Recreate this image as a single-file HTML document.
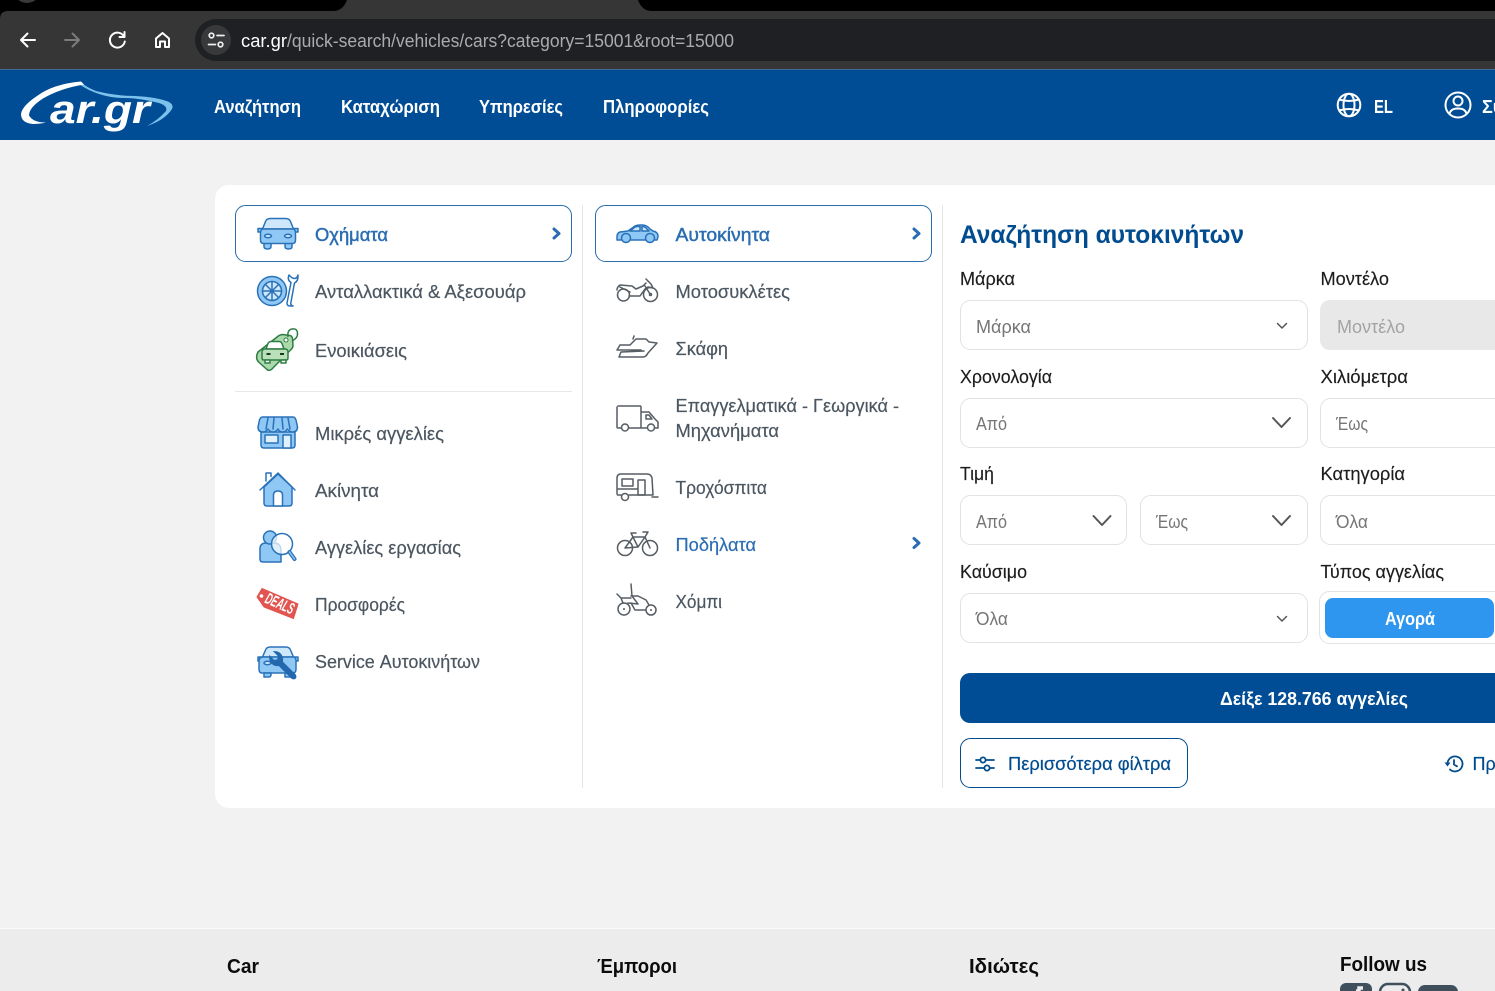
<!DOCTYPE html>
<html lang="el"><head><meta charset="utf-8"><title>car.gr</title>
<style>
html,body{margin:0;padding:0;width:1495px;height:991px;overflow:hidden;background:#f2f2f2}
svg{display:block}
text{font-family:"Liberation Sans","DejaVu Sans",sans-serif}
.nav{font-size:18px;fill:#fff;font-weight:700}
.m{font-size:18px;fill:#4b5660;stroke:#4b5660;stroke-width:.2}
.a{font-size:18px;fill:#2a6db2;stroke:#2a6db2;stroke-width:.45}
.l{font-size:18px;fill:#1c1c1c;stroke:#1c1c1c;stroke-width:.15}
.v{font-size:18px;fill:#757575}
.f{font-size:20px;fill:#0c0c0c;font-weight:700}
.bx{fill:#fff;stroke:#e2e2e2;stroke-width:1}
.ib{fill:#8fc7f5;stroke:#2a72b8;stroke-width:1.5;stroke-linejoin:round;stroke-linecap:round}
.il{fill:#fff;stroke:#2a72b8;stroke-width:1.5;stroke-linejoin:round;stroke-linecap:round}
.g{fill:none;stroke:#555d63;stroke-width:1.5;stroke-linejoin:round;stroke-linecap:round}
.gr{fill:#abd9ab;stroke:#2f7d46;stroke-width:1.5;stroke-linejoin:round;stroke-linecap:round}
.ch{fill:none;stroke:#2a6db2;stroke-width:3;stroke-linecap:round;stroke-linejoin:round}
.sc{fill:none;stroke:#555;stroke-width:1.5;stroke-linecap:round;stroke-linejoin:round}
.sc2{fill:none;stroke:#555;stroke-width:2;stroke-linecap:round;stroke-linejoin:round}
.w{fill:none;stroke:#fff;stroke-width:2;stroke-linecap:round;stroke-linejoin:round}
</style></head>
<body>
<svg xmlns="http://www.w3.org/2000/svg" width="1495" height="991" viewBox="0 0 1495 991">
<!-- browser chrome -->
<rect width="1495" height="70" fill="#000"/>
<path d="M0 70V19q0-8 8-8H333q10 0 14-11H638q4 11 14 11H1495V70Z" fill="#363636"/>
<circle cx="27" cy="-11" r="14" fill="#3a3a3a"/>
<rect x="195" y="19" width="1320" height="42" rx="21" fill="#1f2023"/>
<circle cx="216" cy="40" r="15" fill="#38393b"/>
<g fill="none" stroke="#f0f0f0" stroke-width="1.7" stroke-linecap="round">
<circle cx="211.500" cy="35.500" r="2.300"/><path d="M217 35.500h7"/><path d="M208.500 44.500h7"/><circle cx="220.500" cy="44.500" r="2.300"/>
</g>
<path class="w" d="M35 40H21.500M27.500 33.500L21 40l6.500 6.500"/>
<path d="M65 40H78.500M72.500 33.500L79 40l-6.500 6.500" fill="none" stroke="#7c7c7c" stroke-width="2" stroke-linecap="round" stroke-linejoin="round"/>
<path class="w" d="M124 36.500a7.500 7.500 0 1 0 .8 5M124.500 32v5h-5"/>
<path class="w" d="M156 47V38.500L162.500 33l6.500 5.500V47h-4V41.500h-5V47Z"/>
<text x="241" y="47" font-size="18" fill="#fff" textLength="46" lengthAdjust="spacingAndGlyphs">car.gr</text>
<text x="287" y="47" font-size="18" fill="#a9abad" textLength="447" lengthAdjust="spacingAndGlyphs">/quick-search/vehicles/cars?category=15001&amp;root=15000</text>

<!-- header -->
<rect y="69" width="1495" height="71" fill="#004c95"/>
<rect y="69" width="1495" height="1" fill="#3d6c96"/>
<!-- logo -->
<path d="M81 82q5 5 15 9 20 5 39 5 22 1 34 6 5 3 3 7-7 11-25 17 11-6 19-15 2-5-7-8-20-5-35-5-18 0-35-8-6-3-10-6Z" fill="#7cc1ec"/>
<path d="M81 81.500Q53 84 37 96 22 106 21 114q0 9 12 10 7 0 13-1.500-13 0-17-7 0-8 14-17 17-10 41-14Z" fill="#fff"/>
<text x="50" y="123" font-size="40" font-weight="700" font-style="italic" fill="#fff" textLength="100" lengthAdjust="spacingAndGlyphs">ar.gr</text>

<text class="nav" x="214" y="113" textLength="87" lengthAdjust="spacingAndGlyphs">Αναζήτηση</text>
<text class="nav" x="341" y="113" textLength="99" lengthAdjust="spacingAndGlyphs">Καταχώριση</text>
<text class="nav" x="479" y="113" textLength="84" lengthAdjust="spacingAndGlyphs">Υπηρεσίες</text>
<text class="nav" x="603" y="113" textLength="106" lengthAdjust="spacingAndGlyphs">Πληροφορίες</text>
<g fill="none" stroke="#fff" stroke-width="2">
<circle cx="1349" cy="105" r="11.300"/><ellipse cx="1349" cy="105" rx="5.500" ry="11.300"/><path d="M1339 99.500q10 3 20 0M1339 110.500q10-3 20 0"/>
<circle cx="1458" cy="105" r="12.500"/><circle cx="1458" cy="101" r="4.500"/><path d="M1449.500 114q1-5.500 8.500-5.500t8.500 5.500"/>
</g>
<text class="nav" x="1374" y="113" textLength="19" lengthAdjust="spacingAndGlyphs">EL</text>
<text class="nav" x="1482" y="113">Σύνδεση</text>

<!-- card -->
<rect x="215" y="185" width="1320" height="623" rx="14" fill="#fff"/>
<rect x="582" y="205" width="1" height="583" fill="#e4e4e4"/>
<rect x="942" y="205" width="1" height="583" fill="#e4e4e4"/>
<rect x="235" y="391" width="337" height="1" fill="#e8e8e8"/>
<rect x="235.500" y="205.500" width="336" height="56" rx="10" fill="#fff" stroke="#2a6da8"/>
<rect x="595.500" y="205.500" width="336" height="56" rx="10" fill="#fff" stroke="#2a6da8"/>
<path class="ch" d="M554 229l5 4.500-5 4.500"/><path class="ch" d="M914 229l5 4.500-5 4.500"/><path class="ch" d="M914 538.500l5 4.500-5 4.500"/>

<!-- left icons -->
<!-- car front -->
<path class="ib" d="M258 228.500h4v3.500h-4ZM294 228.500h4v3.500h-4Z"/>
<path class="ib" d="M264 243h7v3.500q0 2.500-3.500 2.500t-3.500-2.500ZM285 243h7v3.500q0 2.500-3.500 2.500t-3.500-2.500Z"/>
<path class="il" style="fill:#cfe7fb" d="M262.500 229l3-7.500q1-3 5-3h15q4 0 5 3l3 7.500Z"/>
<path class="ib" d="M262.500 229h31q2 1 2 4v7q0 3.500-3 3.500h-29q-3 0-3-3.500v-7q0-3 2-4Z"/>
<ellipse class="il" style="fill:#cfe7fb" cx="268" cy="236" rx="3.500" ry="1.700"/><ellipse class="il" style="fill:#cfe7fb" cx="288" cy="236" rx="3.500" ry="1.700"/>
<!-- tyre & wrench -->
<circle class="ib" cx="272" cy="291" r="14.500"/><circle class="il" style="fill:#cfe7fb" cx="272" cy="291" r="9.500"/>
<path class="il" d="M272 281.500v19M262.500 291h19M265.500 284.500l13 13M278.500 284.500l-13 13"/>
<circle cx="272" cy="291" r="2" fill="#2a72b8"/>
<path class="il" d="M289 275q-2 5 2 7.500L287 303q0 3 3 3h3q-3-1-2-4l3.500-19q4-2 3.500-8-1 3.500-3.500 3.500T289 275Z"/>
<!-- rental tag -->
<path class="gr" d="M258 352L279 335.500q2-1 4-1l7 1q2 .5 2.500 3l.5 7q0 2-1.500 3.500L272 369q-2.500 2.500-5 .5l-8.500-7.500q-3.500-4-.5-10Z"/>
<path d="M288 337q-1-7 4-8t5.500 4-5.500 8" fill="none" stroke="#2f7d46" stroke-width="1.5"/>
<circle cx="286" cy="340" r="2" fill="#fff" stroke="#2f7d46"/>
<path class="gr" style="fill:#fff" d="M266 349l2-5.500q1-2 3-2h8q2 0 3 2l2 5.500Z"/>
<path class="gr" style="fill:#b9e0b9" d="M264 349h22q2 1 2 3v6q0 2-2 2h-22q-2 0-2-2v-6q0-2 2-3Z"/>
<path d="M266.500 354h4M280 354h4" stroke="#173c22" stroke-width="2"/>
<path class="gr" style="fill:#fff" d="M265 360h5v3h-5ZM281 360h5v3h-5Z"/>
<!-- shop -->
<path class="ib" d="M261 432h34v13q0 3-3 3h-28q-3 0-3-3Z"/>
<path class="il" style="fill:#e0f0fd" d="M265 435h13v8h-13Z"/><path class="il" style="fill:#e0f0fd" d="M283 435h8v13h-8Z"/>
<path class="ib" d="M263 417h30q2 0 3 3l1.500 7q0 5-5 5-3 0-5-3-2 3-5 3-3 0-4.500-3-2 3-5 3-3 0-5-3-2 3-5 3-5 0-5-5l1.500-7q1-3 3-3Z"/>
<path class="ib" style="fill:none" d="M268 418l-2 11M274 418l-1 11M282 418l1 11M288 418l2 11"/>
<!-- house -->
<path class="ib" d="M264 487v16q0 3 3 3h22q3 0 3-3v-16l-14-13Z"/>
<path class="il" d="M273.500 506v-11q0-4 4.500-4t4.500 4v11Z"/>
<path d="M260 490l18-17 17 17" fill="none" stroke="#2a72b8" stroke-width="1.500" stroke-linecap="round" stroke-linejoin="round"/>
<path class="il" d="M266 481v-8h5v3.500"/>
<!-- person search -->
<path class="ib" d="M260 559v-10q0-6 6-6h8q6 0 7 6v13h-18q-3 0-3-3Z"/>
<circle class="ib" cx="270" cy="537.500" r="6.500"/>
<circle cx="282" cy="544" r="10.500" fill="#fff" fill-opacity=".72" stroke="#2a72b8" stroke-width="1.5"/>
<path d="M289.500 552l5 7" stroke="#2a72b8" stroke-width="4" stroke-linecap="round"/>
<path d="M289.500 552l5 7" stroke="#8fc7f5" stroke-width="1.500" stroke-linecap="round"/>
<!-- deals -->
<path d="M262 588.500L298 604l-4.500 14.500L264 607l-7-10Z" fill="#e2544f" stroke="#e2544f" stroke-linejoin="round"/>
<circle cx="261.500" cy="596" r="1.800" fill="#fff"/>
<text x="265" y="608.500" font-size="16" font-weight="700" font-style="italic" fill="#fff" transform="rotate(24 279 603)" textLength="30" lengthAdjust="spacingAndGlyphs">DEALS</text>
<!-- service -->
<path class="ib" d="M258 657h4v4h-4ZM294 657h4v4h-4Z"/>
<path class="il" style="fill:#cfe7fb" d="M262.500 657l3-7q1-3 5-3h15q4 0 5 3l3 7Z"/>
<path class="ib" d="M262 657h32q2 1 2 4v8q0 4-3 4h-31q-3 0-3-4v-8q0-3 3-4Z"/>
<path class="ib" d="M264 677v-4h7v2q0 2-3 2ZM285 677v-4h7v2q0 2-3 2Z"/>
<ellipse class="il" style="fill:#cfe7fb" cx="267.500" cy="663" rx="3.500" ry="1.700"/>
<path d="M295 675l-13-13q1-5-2-8-2-2-5-2l4 4-1 4-4 1-4-4q0 4 2 6 3 3 7 2l13 13q2 1 3 0t0-3Z" fill="#2368ae" stroke="#2368ae" stroke-width="1.800"/>

<!-- middle icons -->
<path class="ib" d="M617 237q0-4 3-5l8-1 7-5q2-1 5-1h2q5 0 8 4l3 2q5 1 5 5 0 2-1 4h-40q0-1 0-3Z"/>
<circle class="ib" cx="626" cy="238" r="4.500"/><circle class="ib" cx="650" cy="238" r="4.500"/>
<path class="il" style="fill:#cfe7fb" d="M630 231l5-4q1-.5 3-.5h2v4.500ZM642 226.500q3 0 5 2.500l2 2h-7Z"/>
<circle class="g" cx="623.500" cy="295" r="6"/><circle class="g" cx="650.500" cy="294.500" r="7"/><circle class="g" cx="650.500" cy="294.500" r="1"/><path class="g" d="M629 296h11l5-7 3-2 5 1-2-4-5-5M617 290q0-3 3-5l12 1 4 3 7-3 3-3M620 287l10 5M645 286l5 8"/>
<path class="g" d="M620 345h10l6-6h10l3 3 8 1-9 10q-2 4-5 4h-24l2-5 23-1M620 345l-3 5h24M633 339l1-3M636 351h8"/>
<path class="g" d="M618 406h22q1 0 1 1v21h-12M621 428h-3q-1 0-1-1v-20M641 412h8l6 7 3 3v6h-3M641 428h6"/><circle class="g" cx="625" cy="427.500" r="3.500"/><circle class="g" cx="651" cy="427.500" r="3.500"/><path class="g" d="M646 415h3l3 4h-6Z"/>
<path class="g" d="M621 495h-3q-1 0-1-2v-15q0-4 4-4h26q4 0 5 4l1 17H629"/><path class="g" d="M622 479h11v7h-11ZM638 480h7v15h-7ZM652 497h6M618 489h20"/><circle class="g" cx="625" cy="497" r="3.500"/>
<circle class="g" cx="625" cy="548" r="7.500"/><circle class="g" cx="650" cy="548" r="7.500"/><path class="g" d="M625 548l8-11h12l5 11M645 537l-7 10-5-10M638 547l-13 1M631 533h5M643 532h5l-3 5M633 537l-2-4"/>
<circle class="g" cx="624" cy="609" r="6"/><circle class="g" cx="651" cy="610" r="5"/><circle cx="624" cy="609" r="1" fill="#555d63"/><circle cx="651" cy="610" r="1" fill="#555d63"/><path class="g" d="M631 584l1 12 6 8-10-1M617 594l4 4h10M621 598l2 5M638 596l8 4 3 5M631 603l4 7h10M631 596h7"/>

<!-- menu text -->
<text class="a" x="315" y="241" textLength="73" lengthAdjust="spacingAndGlyphs">Οχήματα</text>
<text class="m" x="315" y="298" textLength="211" lengthAdjust="spacingAndGlyphs">Ανταλλακτικά &amp; Αξεσουάρ</text>
<text class="m" x="315" y="357" textLength="92" lengthAdjust="spacingAndGlyphs">Ενοικιάσεις</text>
<text class="m" x="315" y="440" textLength="129" lengthAdjust="spacingAndGlyphs">Μικρές αγγελίες</text>
<text class="m" x="315" y="497" textLength="64" lengthAdjust="spacingAndGlyphs">Ακίνητα</text>
<text class="m" x="315" y="554" textLength="146" lengthAdjust="spacingAndGlyphs">Αγγελίες εργασίας</text>
<text class="m" x="315" y="611" textLength="90" lengthAdjust="spacingAndGlyphs">Προσφορές</text>
<text class="m" x="315" y="668" textLength="165" lengthAdjust="spacingAndGlyphs">Service Αυτοκινήτων</text>
<text class="a" x="675.500" y="241" textLength="94.500" lengthAdjust="spacingAndGlyphs">Αυτοκίνητα</text>
<text class="m" x="675.500" y="298" textLength="114.500" lengthAdjust="spacingAndGlyphs">Μοτοσυκλέτες</text>
<text class="m" x="675.500" y="355" textLength="52.500" lengthAdjust="spacingAndGlyphs">Σκάφη</text>
<text class="m" x="675.500" y="412" textLength="223.500" lengthAdjust="spacingAndGlyphs">Επαγγελματικά - Γεωργικά -</text>
<text class="m" x="675.500" y="437" textLength="103.500" lengthAdjust="spacingAndGlyphs">Μηχανήματα</text>
<text class="m" x="675.500" y="494" textLength="91.500" lengthAdjust="spacingAndGlyphs">Τροχόσπιτα</text>
<text class="a" style="stroke-width:.2" x="675.500" y="551" textLength="80.500" lengthAdjust="spacingAndGlyphs">Ποδήλατα</text>
<text class="m" x="675.500" y="608" textLength="46.500" lengthAdjust="spacingAndGlyphs">Χόμπι</text>

<!-- form -->
<text x="960" y="243" font-size="25" font-weight="700" fill="#004c8f" textLength="284" lengthAdjust="spacingAndGlyphs">Αναζήτηση αυτοκινήτων</text>
<text class="l" x="960" y="285" textLength="55" lengthAdjust="spacingAndGlyphs">Μάρκα</text>
<text class="l" x="1320.500" y="285" textLength="68.500" lengthAdjust="spacingAndGlyphs">Μοντέλο</text>
<text class="l" x="960" y="383" textLength="92" lengthAdjust="spacingAndGlyphs">Χρονολογία</text>
<text class="l" x="1320.500" y="383" textLength="87.500" lengthAdjust="spacingAndGlyphs">Χιλιόμετρα</text>
<text class="l" x="960" y="480" textLength="34" lengthAdjust="spacingAndGlyphs">Τιμή</text>
<text class="l" x="1320.500" y="480" textLength="84.500" lengthAdjust="spacingAndGlyphs">Κατηγορία</text>
<text class="l" x="960" y="578" textLength="67" lengthAdjust="spacingAndGlyphs">Καύσιμο</text>
<text class="l" x="1320.500" y="578" textLength="123.500" lengthAdjust="spacingAndGlyphs">Τύπος αγγελίας</text>

<rect class="bx" x="960.500" y="300.500" width="347" height="49" rx="10"/>
<rect x="1320" y="300" width="200" height="50" rx="10" fill="#e8e8e8"/>
<rect class="bx" x="960.500" y="398.500" width="347" height="49" rx="10"/>
<rect class="bx" x="1320.500" y="398.500" width="200" height="49" rx="10"/>
<rect class="bx" x="960.500" y="495.500" width="166" height="49" rx="10"/>
<rect class="bx" x="1140.500" y="495.500" width="167" height="49" rx="10"/>
<rect class="bx" x="1320.500" y="495.500" width="200" height="49" rx="10"/>
<rect class="bx" x="960.500" y="593.500" width="347" height="49" rx="10"/>
<rect class="bx" x="1319.500" y="591.500" width="200" height="52" rx="10"/>
<rect x="1325" y="598" width="169" height="40" rx="8" fill="#2e96ee"/>
<rect x="960" y="673" width="600" height="50" rx="10" fill="#004c95"/>
<rect x="960.500" y="738.500" width="227" height="49" rx="10" fill="#fff" stroke="#004c8f"/>

<path class="sc" d="M1277.500 323.500l4.500 4.500 4.500-4.500"/>
<path class="sc" d="M1277.500 616.500l4.500 4.500 4.500-4.500"/>
<path class="sc2" d="M1273 418l8.500 9 8.500-9"/>
<path class="sc2" d="M1093.500 516l8.500 9 8.500-9"/>
<path class="sc2" d="M1273 516l8.500 9 8.500-9"/>

<text class="v" x="976" y="333" textLength="55" lengthAdjust="spacingAndGlyphs">Μάρκα</text>
<text class="v" style="fill:#a3a3a3" x="1337" y="333" textLength="68" lengthAdjust="spacingAndGlyphs">Μοντέλο</text>
<text class="v" x="976" y="430" textLength="31" lengthAdjust="spacingAndGlyphs">Από</text>
<text class="v" x="1336" y="430" textLength="32" lengthAdjust="spacingAndGlyphs">Έως</text>
<text class="v" x="976" y="528" textLength="31" lengthAdjust="spacingAndGlyphs">Από</text>
<text class="v" x="1156" y="528" textLength="32" lengthAdjust="spacingAndGlyphs">Έως</text>
<text class="v" x="1336" y="528" textLength="32" lengthAdjust="spacingAndGlyphs">Όλα</text>
<text class="v" x="976" y="625" textLength="32" lengthAdjust="spacingAndGlyphs">Όλα</text>
<text x="1385" y="625" font-size="18" font-weight="700" fill="#fff" textLength="50" lengthAdjust="spacingAndGlyphs">Αγορά</text>
<text x="1220" y="705" font-size="18" font-weight="700" fill="#fff" textLength="188" lengthAdjust="spacingAndGlyphs">Δείξε 128.766 αγγελίες</text>
<text x="1008" y="770" font-size="18" fill="#004c8f" stroke="#004c8f" stroke-width=".2" textLength="163" lengthAdjust="spacingAndGlyphs">Περισσότερα φίλτρα</text>
<g fill="none" stroke="#004c8f" stroke-width="1.800" stroke-linecap="round">
<path d="M976 760h4M986 760h8M976 768h8M990 768h4"/><circle cx="983" cy="760" r="2.600"/><circle cx="987" cy="768" r="2.600"/>
<path d="M1447.500 764a7.500 7.500 0 1 1 2.500 5.500M1454 760v4.500l3 1.800"/>
</g>
<path d="M1444.500 762.500h6l-3 4Z" fill="#004c8f"/>
<text x="1472.500" y="770" font-size="18" fill="#004c8f" stroke="#004c8f" stroke-width=".2">Πρόσφατες</text>

<!-- footer -->
<rect y="928" width="1495" height="63" fill="#ececec"/>
<rect y="928" width="1495" height="1" fill="#fbfbfb"/>
<text class="f" x="227" y="973" textLength="32" lengthAdjust="spacingAndGlyphs">Car</text>
<text class="f" x="597" y="973" textLength="80" lengthAdjust="spacingAndGlyphs">Έμποροι</text>
<text class="f" x="969" y="973" textLength="70" lengthAdjust="spacingAndGlyphs">Ιδιώτες</text>
<text class="f" x="1340" y="971" textLength="87" lengthAdjust="spacingAndGlyphs">Follow us</text>
<rect x="1340" y="983" width="32" height="30" rx="6" fill="#3f505c"/>
<path d="M1359 991v-3h4M1359 991h-3" stroke="#ececec" stroke-width="3.500" fill="none"/>
<rect x="1380" y="984" width="30" height="30" rx="8" fill="none" stroke="#3f505c" stroke-width="2.500"/>
<circle cx="1403" cy="990" r="1.500" fill="#3f505c"/>
<rect x="1418" y="985" width="40" height="30" rx="7" fill="#3f505c"/>
</svg>
</body></html>
